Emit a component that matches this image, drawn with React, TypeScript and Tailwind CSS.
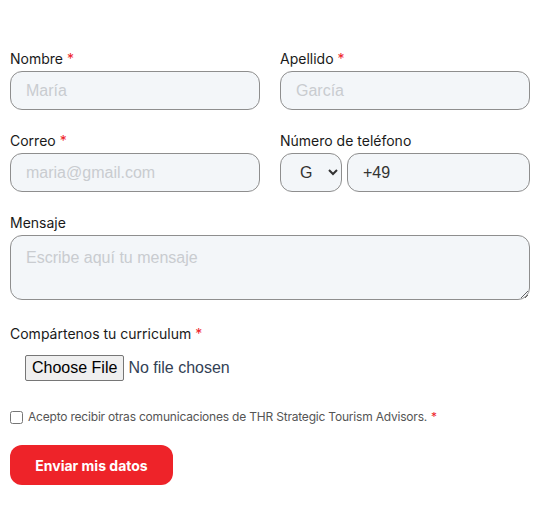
export default function App() {
  const label = "block text-[14px] leading-5 text-[#1a1a1a] font-['Inter',sans-serif] font-normal mb-[2px]";
  const input =
    "w-full h-[39px] rounded-[12px] border border-[#8e8e8e] bg-[#f3f6f9] px-[15px] text-[16px] text-[#333] font-['Liberation_Sans',Arial,sans-serif] placeholder:text-[#c9ccd0] outline-none";
  const star = <span className="text-[#ee2329] ml-1">*</span>;

  return (
    <div className="w-[540px] bg-white px-[10px] pt-[49px] pb-8">
      <div className="grid grid-cols-2 gap-x-[20px] gap-y-[21px]">
        <div>
          <label className={label}>Nombre{star}</label>
          <input className={input} placeholder="María" />
        </div>
        <div>
          <label className={label}>Apellido{star}</label>
          <input className={input} placeholder="García" />
        </div>
        <div>
          <label className={label}>Correo{star}</label>
          <input className={input} placeholder="maria@gmail.com" />
        </div>
        <div>
          <label className={label}>Número de teléfono</label>
          <div className="flex gap-[5px]">
            <select className="w-[62px] h-[39px] rounded-[12px] border border-[#8e8e8e] bg-[#f3f6f9] pl-[15px] text-[16px] text-[#333] font-['Liberation_Sans',Arial,sans-serif]">
              <option>G</option>
            </select>
            <input className={input + " flex-1"} defaultValue="+49" />
          </div>
        </div>
        <div className="col-span-2">
          <label className={label}>Mensaje</label>
          <textarea
            className="w-full h-[65px] rounded-[12px] border border-[#8e8e8e] bg-[#f3f6f9] px-[15px] py-[10px] text-[16px] text-[#333] font-['Liberation_Sans',Arial,sans-serif] placeholder:text-[#c9ccd0] outline-none block"
            placeholder="Escribe aquí tu mensaje"
          />
        </div>
      </div>

      <div className="mt-[24px]">
        <label className={label}>Compártenos tu curriculum{star}</label>
        <input
          type="file"
          className="mt-[9px] ml-[15px] text-[16px] text-[#334155] font-['Liberation_Sans',Arial,sans-serif] file:mr-1 file:px-[6px] file:py-0 file:border file:border-[#767676] file:rounded-[2px] file:bg-[#efefef] file:text-black"
        />
      </div>

      <div className="mt-[27px] flex items-center gap-[5px]">
        <input type="checkbox" className="w-[13px] h-[13px] m-0" />
        <span className="text-[12px] tracking-[-0.2px] text-[#555] font-['Inter',sans-serif]">
          Acepto recibir otras comunicaciones de THR Strategic Tourism Advisors.
          <span className="text-[#ee2329] ml-1">*</span>
        </span>
      </div>

      <button className="mt-[19px] w-[163px] h-[40px] rounded-[12px] bg-[#ee2329] text-white text-[14px] font-bold font-['Inter',sans-serif]">
        Enviar mis datos
      </button>
    </div>
  );
}
